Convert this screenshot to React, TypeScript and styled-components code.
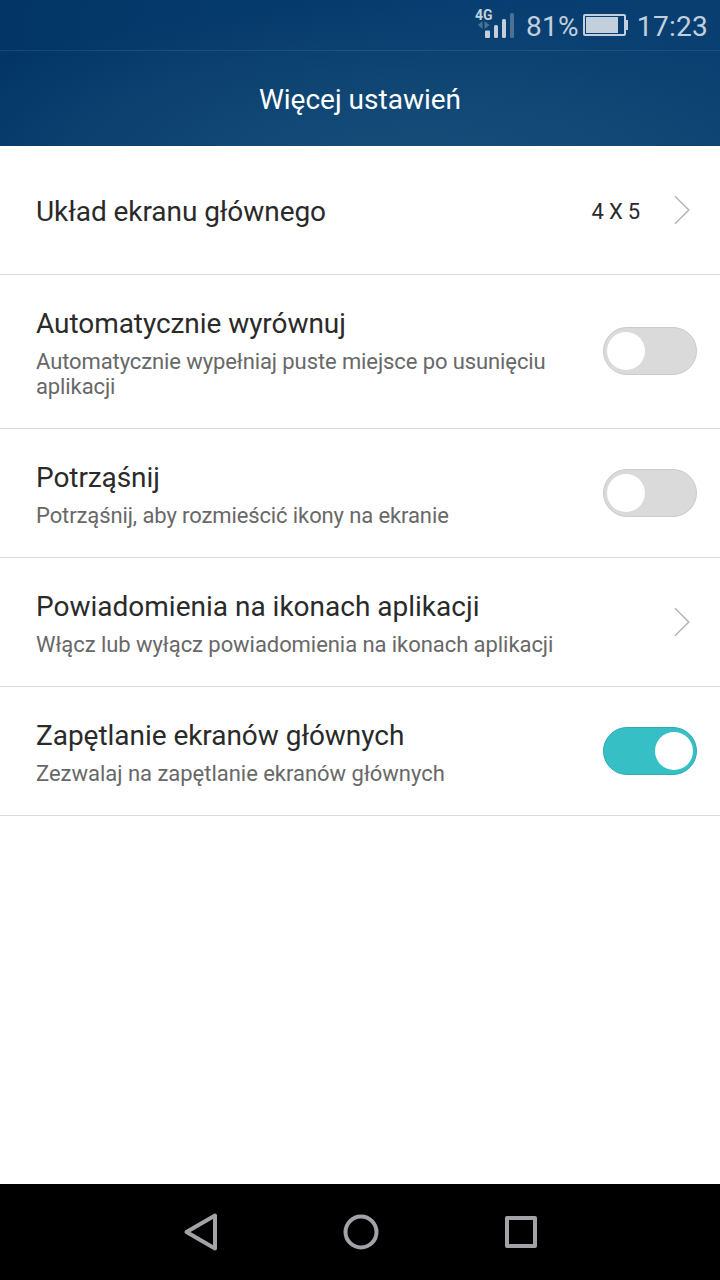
import React from "react";
import styled, { createGlobalStyle } from "styled-components";

const GlobalStyle = createGlobalStyle`
  *, *::before, *::after { box-sizing: border-box; }
  body { margin: 0; background: #fff; font-family: Roboto, "Noto Sans", sans-serif; }
`;

const Screen = styled.div`
  width: 720px;
  height: 1280px;
  display: flex;
  flex-direction: column;
  background: #fff;
  overflow: hidden;
`;

const Header = styled.header`
  height: 146px;
  flex: none;
  display: flex;
  flex-direction: column;
  background:
    radial-gradient(ellipse 520px 165px at 420px 165px, rgba(23, 79, 122, 0.95), rgba(20, 74, 118, 0.75) 45%, rgba(10, 64, 112, 0) 100%),
    linear-gradient(100deg, #033667 0%, #053a6c 35%, #073d70 60%, #083e70 100%);
`;

const StatusBar = styled.div`
  height: 51px;
  display: flex;
  align-items: center;
  justify-content: flex-end;
  padding: 2px 12px 0 0;
  border-bottom: 1px solid rgba(90, 150, 190, 0.2);
  color: #c2d0dd;
`;

const StatusText = styled.span<{ $gap: number }>`
  font-size: 28px;
  line-height: 34px;
  letter-spacing: 0.28px;
  margin-left: ${(p) => p.$gap}px;
  padding-top: 2px;
`;

const SignalBox = styled.div`
  position: relative;
  width: 39px;
  height: 32px;
  margin-bottom: 4px;
`;

const NetworkLabel = styled.span`
  position: absolute;
  left: 0;
  top: 0;
  font-size: 14px;
  line-height: 14px;
  font-weight: 700;
`;

const Battery = styled.svg`
  width: 46px;
  height: 24px;
  margin-left: 4px;
`;

const Title = styled.h1`
  margin: 0;
  flex: 1;
  display: flex;
  align-items: center;
  justify-content: center;
  padding-top: 2px;
  font-size: 28px;
  font-weight: 400;
  color: #fff;
`;

const List = styled.main`
  flex: 1;
`;

const Row = styled.section<{ $tall?: boolean }>`
  height: ${(p) => (p.$tall ? 154 : 129)}px;
  display: flex;
  align-items: center;
  padding-left: 36px;
  padding-bottom: ${(p) => (p.$tall ? 1 : 0)}px;
  border-bottom: 1px solid #d9d9d9;
`;

const Texts = styled.div<{ $tall?: boolean }>`
  flex: 1;
  display: flex;
  flex-direction: column;
  gap: 9px;
  padding-top: ${(p) => (p.$tall ? 4 : 2)}px;
`;

const Name = styled.div<{ $tracking: number }>`
  font-size: 28px;
  line-height: 33px;
  letter-spacing: ${(p) => p.$tracking}px;
  color: #2a2a2a;
`;

const Note = styled.div<{ $tracking: number }>`
  max-width: 530px;
  font-size: 22px;
  line-height: 25px;
  letter-spacing: ${(p) => p.$tracking}px;
  color: #686868;
`;

const Value = styled.span`
  font-size: 22px;
  line-height: 26px;
  letter-spacing: -0.2px;
  color: #2a2a2a;
  padding-top: 3px;
  margin-right: 33px;
`;

const Arrow = styled.svg`
  flex: none;
  width: 18px;
  height: 30px;
  margin-right: 29px;
`;

const Toggle = styled.div<{ $on?: boolean }>`
  flex: none;
  width: 94px;
  height: 48px;
  margin-right: 23px;
  padding: 0 3px;
  display: flex;
  align-items: center;
  justify-content: ${(p) => (p.$on ? "flex-end" : "flex-start")};
  border-radius: 24px;
  border: 1px solid ${(p) => (p.$on ? "#2fabb2" : "#cbcbcb")};
  background: ${(p) => (p.$on ? "#36c0c6" : "#dadada")};
`;

const Knob = styled.div`
  width: 38px;
  height: 38px;
  border-radius: 50%;
  background: #fff;
`;

const NavBar = styled.nav`
  height: 96px;
  flex: none;
  display: flex;
  justify-content: center;
  gap: 112px;
  align-items: center;
  background: #000;
`;

const NavIcon = styled.svg`
  width: 48px;
  height: 48px;
  fill: none;
  stroke: #a2a3a6;
  stroke-width: 4;
  stroke-linejoin: round;
`;

const Chevron = () => (
  <Arrow viewBox="0 0 18 30" fill="none" stroke="#b3b3b3" strokeWidth="1.5">
    <path d="M2 1.3 15.8 15 2 28.7" />
  </Arrow>
);

type Item = {
  name: string;
  nameTracking?: number;
  note?: string;
  noteTracking?: number;
  tall?: boolean;
  value?: string;
  control: "arrow" | "on" | "off";
};

const items: Item[] = [
  { name: "Układ ekranu głównego", nameTracking: -0.06, value: "4 X 5", control: "arrow" },
  {
    name: "Automatycznie wyrównuj",
    nameTracking: -0.06,
    note: "Automatycznie wypełniaj puste miejsce po usunięciu aplikacji",
    noteTracking: -0.1,
    tall: true,
    control: "off",
  },
  {
    name: "Potrząśnij",
    nameTracking: -0.08,
    note: "Potrząśnij, aby rozmieścić ikony na ekranie",
    noteTracking: -0.11,
    control: "off",
  },
  {
    name: "Powiadomienia na ikonach aplikacji",
    note: "Włącz lub wyłącz powiadomienia na ikonach aplikacji",
    noteTracking: -0.06,
    control: "arrow",
  },
  {
    name: "Zapętlanie ekranów głównych",
    nameTracking: -0.04,
    note: "Zezwalaj na zapętlanie ekranów głównych",
    noteTracking: -0.02,
    control: "on",
  },
];

export default function App() {
  return (
    <Screen>
      <GlobalStyle />
      <Header>
        <StatusBar>
          <SignalBox>
            <NetworkLabel>4G</NetworkLabel>
            <svg width="39" height="32" viewBox="0 0 39 32" fill="#c2d0dd">
              <path d="M7.500 13v8L3 17zM9.500 13v8l5-4z" opacity="0.35" />
              <rect x="10" y="22.500" width="5" height="7.500" rx="1" />
              <rect x="19" y="17" width="4" height="13" rx="1.500" />
              <rect x="27" y="11" width="4" height="19" rx="1.500" />
              <rect x="35" y="5" width="4" height="25" rx="1.500" opacity="0.35" />
            </svg>
          </SignalBox>
          <StatusText $gap={12}>81%</StatusText>
          <Battery viewBox="0 0 46 24" fill="#c2d0dd">
            <rect x="1" y="1" width="41" height="20" rx="1" fill="none" stroke="#c2d0dd" strokeWidth="2" />
            <rect x="3" y="3" width="32" height="16" />
            <path d="M43 6h2v10h-2z" />
          </Battery>
          <StatusText $gap={8}>17:23</StatusText>
        </StatusBar>
        <Title>Więcej ustawień</Title>
      </Header>
      <List>
        {items.map((item) => (
          <Row key={item.name} $tall={item.tall}>
            <Texts $tall={item.tall}>
              <Name $tracking={item.nameTracking ?? 0}>{item.name}</Name>
              {item.note && <Note $tracking={item.noteTracking ?? 0}>{item.note}</Note>}
            </Texts>
            {item.value && <Value>{item.value}</Value>}
            {item.control === "arrow" ? (
              <Chevron />
            ) : (
              <Toggle $on={item.control === "on"}>
                <Knob />
              </Toggle>
            )}
          </Row>
        ))}
      </List>
      <NavBar>
        <NavIcon viewBox="0 0 48 48">
          <path d="M39 7.500v33L10.500 24z" />
        </NavIcon>
        <NavIcon viewBox="0 0 48 48">
          <circle cx="25" cy="24" r="15.500" />
        </NavIcon>
        <NavIcon viewBox="0 0 48 48">
          <rect x="11" y="10" width="28" height="28" />
        </NavIcon>
      </NavBar>
    </Screen>
  );
}
